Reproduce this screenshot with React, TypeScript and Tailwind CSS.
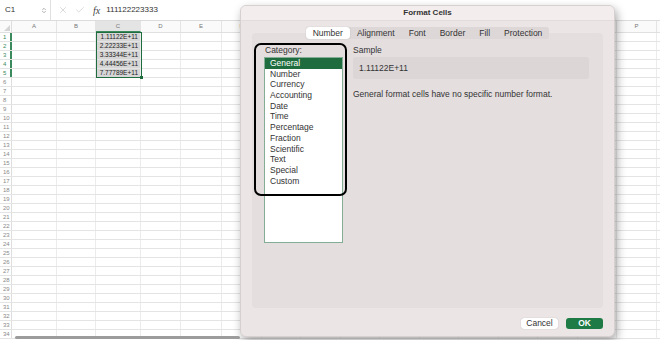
import { ChevronUp, ChevronDown, X, Check } from "lucide-react";

const COLS: { key: string; label: string; w: number }[] = [
  { key: "A", label: "A", w: 45 },
  { key: "B", label: "B", w: 39 },
  { key: "C", label: "C", w: 45 },
  { key: "D", label: "D", w: 40 },
  { key: "E", label: "E", w: 41 },
  ...["F", "G", "H", "I", "J", "K", "L", "M", "N", "O"].map(k => ({ key: k, label: k, w: 39.5 })),
  { key: "P", label: "P", w: 40 },
  { key: "Q", label: "", w: 40 },
];

const VALUES = ["1.11122E+11", "2.22233E+11", "3.33344E+11", "4.44456E+11", "7.77789E+11"];

const CATEGORIES = ["General", "Number", "Currency", "Accounting", "Date", "Time", "Percentage", "Fraction", "Scientific", "Text", "Special", "Custom"];

const TABS = ["Number", "Alignment", "Font", "Border", "Fill", "Protection"];

const ROWS = Array.from({ length: 34 }, (_, i) => i + 1);

function Sheet() {
  return (
    <div className="flex flex-col">
      {/* Formula bar */}
      <div className="h-[21px] flex items-center border-b border-[#dcdcdc] bg-white text-[8px] text-[#333]">
        <div className="w-[51px] h-full flex items-center justify-between pl-[5px] pr-[3px] border-r border-[#e0e0e0]">
          <span>C1</span>
          <div className="flex flex-col text-[#999] -space-y-[3px]">
            <ChevronUp className="w-[6px] h-[6px]" strokeWidth={3} />
            <ChevronDown className="w-[6px] h-[6px]" strokeWidth={3} />
          </div>
        </div>
        <div className="flex items-center pl-[7px] gap-[7px] text-[#c4c4c4]">
          <X className="w-[10px] h-[10px]" strokeWidth={1.5} />
          <Check className="w-[10px] h-[10px]" strokeWidth={1.5} />
        </div>
        <span className="ml-[8px] italic text-[10px] text-[#444] font-['Liberation_Serif',serif]">fx</span>
        <span className="ml-[6px] text-[8px] text-[#333]">111122223333</span>
      </div>

      {/* Column headers */}
      <div className="h-[12px] flex border-b border-[#e0e0e0] bg-[#fafafa]">
        <div className="w-[12px] shrink-0 border-r border-[#dedede] relative">
          <div className="absolute right-[1px] bottom-[1px] w-0 h-0 border-l-[6px] border-l-transparent border-b-[6px] border-b-[#d4d4d4]" />
        </div>
        {COLS.map(c => (
          <div
            key={c.key}
            style={{ width: c.w }}
            className={`shrink-0 border-r border-[#e4e4e4] flex items-center justify-center text-[6px] text-[#777] ${c.key === "C" ? "bg-[#e4e4e4] border-b border-b-[#3d8a5c]" : ""}`}
          >
            {c.label}
          </div>
        ))}
      </div>

      {/* Rows */}
      {ROWS.map(r => (
        <div key={r} className="h-[9px] flex border-b border-[#e4e4e4]">
          <div className={`w-[12px] shrink-0 flex items-center pl-[3px] text-[6px] border-r ${r <= 5 ? "text-[#3b8a5d] border-r-[#3b8a5d] border-r-2" : "text-[#888] border-[#dedede]"}`}>
            {r}
          </div>
          {COLS.map(c => {
            const sel = c.key === "C" && r <= 5;
            return (
              <div
                key={c.key}
                style={{ width: c.w }}
                className={`shrink-0 border-r border-[#ececec] flex items-center justify-end pr-[2px] text-[6.5px] text-[#222] ${sel ? "bg-[#d6d6d6]" : "bg-white"}`}
              >
                {sel ? VALUES[r - 1] : ""}
              </div>
            );
          })}
        </div>
      ))}
    </div>
  );
}

function FormatCells() {
  return (
    <div className="absolute left-[240px] top-[5px] w-[375px] h-[332px] rounded-[6px] bg-[#ebe5e6] shadow-[2px_4px_10px_rgba(0,0,0,0.35)] border border-[#d6d0d1] flex flex-col overflow-hidden">
      <div className="h-[15px] shrink-0 bg-[#f3eded] border-b border-[#e2dcdd] flex items-center justify-center text-[8px] font-bold text-[#333]">
        Format Cells
      </div>

      <div className="flex flex-col px-[11px]">
        {/* Tabs */}
        <div className="relative z-10 mt-[6px] -mb-[6px] flex justify-center">
          <div className="flex h-[12px] rounded-[3px] bg-[#ddd7d8] text-[8.5px] text-[#333]">
            {TABS.map((t, i) => (
              <div
                key={t}
                className={`px-[7px] flex items-center rounded-[3px] ${i === 0 ? "bg-white shadow-[0_0_1px_rgba(0,0,0,0.3)]" : ""}`}
              >
                {t}
              </div>
            ))}
          </div>
        </div>

        {/* Panel */}
        <div className="relative h-[275px] rounded-[4px] bg-[#e4dedf] flex gap-[10px] pl-[12px] pt-[12px] text-[8.5px] text-[#333]">
          <div className="w-[79px] flex flex-col">
            <div className="h-[10px] leading-[10px] mb-[2px] pl-[1px]">Category:</div>
            <div className="h-[186px] bg-white border-[1.5px] border-[#83ad95]">
              {CATEGORIES.map((c, i) => (
                <div
                  key={c}
                  className={`h-[10.7px] leading-[10.7px] pl-[5px] ${i === 0 ? "bg-[#1f6d3e] text-white" : ""}`}
                >
                  {c}
                </div>
              ))}
            </div>
          </div>

          <div className="w-[236px] flex flex-col">
            <div className="h-[10px] leading-[10px] mb-[2px]">Sample</div>
            <div className="h-[22px] rounded-[3px] bg-[#dcd6d7] flex items-center pl-[6px]">1.11122E+11</div>
            <div className="mt-[9px]">General format cells have no specific number format.</div>
          </div>

          {/* hand-drawn highlight */}
          <div className="absolute left-[2px] top-[10px] w-[93px] h-[153px] border-2 border-black rounded-[7px]" />
        </div>

        {/* Buttons */}
        <div className="mt-[10px] flex justify-end gap-[8px] text-[8.5px]">
          <div className="w-[37px] h-[11px] rounded-[3px] bg-white flex items-center justify-center text-[#333] shadow-[0_0_1px_rgba(0,0,0,0.3)]">
            Cancel
          </div>
          <div className="w-[37px] h-[11px] rounded-[3px] bg-[#1e7b45] flex items-center justify-center text-white font-bold">
            OK
          </div>
        </div>
      </div>
    </div>
  );
}

export default function App() {
  return (
    <div className="relative w-[660px] h-[340px] overflow-hidden bg-white font-['Liberation_Sans',Arial,sans-serif]">
      <Sheet />
      {/* selection outline C1:C5 */}
      <div className="absolute left-[96px] top-[32px] w-[46px] h-[46px] border border-[#1f6d3e]">
        <div className="absolute -right-[2px] -bottom-[2px] w-[3px] h-[3px] bg-[#1f6d3e]" />
      </div>
      <FormatCells />
      <div className="absolute left-[15px] bottom-[1px] w-[225px] h-[3px] rounded-full bg-[#9c9c9c]" />
    </div>
  );
}
